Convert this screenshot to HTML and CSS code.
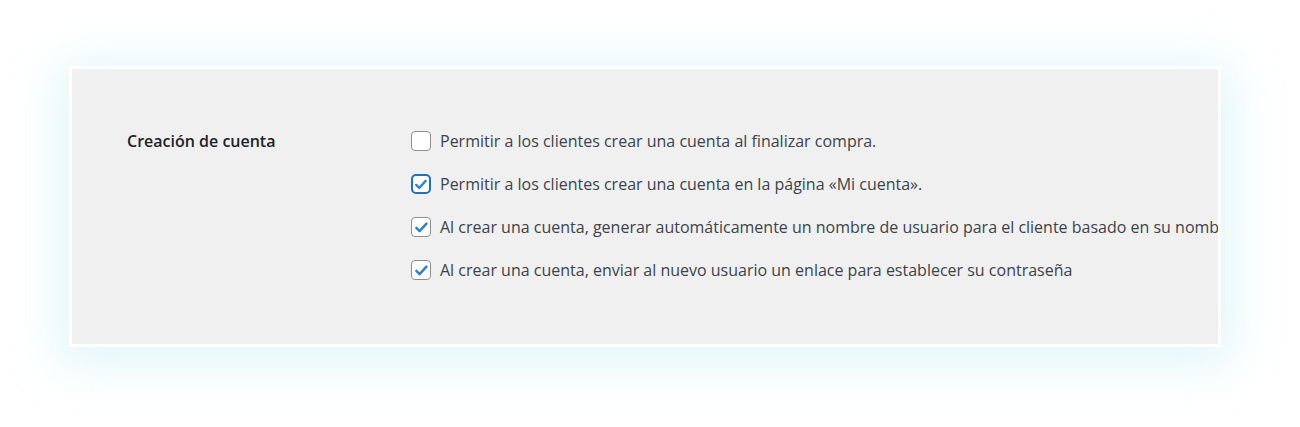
FILE: index.html
```html
<!DOCTYPE html>
<html lang="es">
<head>
  <meta charset="UTF-8" />
  <title>Creación de cuenta</title>
  <link rel="stylesheet" href="styles.css">
</head>
<body>
  <div class="card">
    <div class="row">
      <div class="label">Creación de cuenta</div>
      <ul class="options">
        <li class="opt">
          <span class="box"></span>
          <span>Permitir a los clientes crear una cuenta al finalizar compra.</span>
        </li>
        <li class="opt">
          <span class="box checked focus">
            <svg viewBox="0 0 20 20"><path d="M4 10.5l3.8 3.8 8-8.8" /></svg>
          </span>
          <span>Permitir a los clientes crear una cuenta en la página «Mi cuenta».</span>
        </li>
        <li class="opt">
          <span class="box checked">
            <svg viewBox="0 0 20 20"><path d="M4 10.5l3.8 3.8 8-8.8" /></svg>
          </span>
          <span>Al crear una cuenta, generar automáticamente un nombre de usuario para el cliente basado en su nombre, apellidos o correo electrónico</span>
        </li>
        <li class="opt">
          <span class="box checked">
            <svg viewBox="0 0 20 20"><path d="M4 10.5l3.8 3.8 8-8.8" /></svg>
          </span>
          <span>Al crear una cuenta, enviar al nuevo usuario un enlace para establecer su contraseña</span>
        </li>
      </ul>
    </div>
  </div>
</body>
</html>
```

FILE: styles.css
```css
* {
  margin: 0;
  padding: 0;
  box-sizing: border-box;
}
html, body {
  height: 100%;
}
body {
  background: #fff;
  font-family: "Open Sans", "Noto Sans", sans-serif;
  color: #3c434a;
  padding: 66px 0 0 69px;
}
.card {
  width: 1152px;
  height: 281px;
  background: #f0f0f1;
  border: 3px solid #fff;
  box-shadow: 0 8px 45px 10px rgba(170, 228, 238, 0.35);
  overflow: hidden;
}
.row {
  display: flex;
  padding: 60px 0 0 55px;
}
.label {
  flex: none;
  width: 284px;
  font-size: 16px;
  font-weight: 600;
  color: #1d2327;
  line-height: 24px;
  white-space: nowrap;
}
.options {
  list-style: none;
  display: flex;
  flex-direction: column;
  gap: 19px;
}
.opt {
  display: flex;
  align-items: center;
  gap: 9px;
  font-size: 16px;
  line-height: 24px;
  white-space: nowrap;
}
.box {
  width: 20px;
  height: 20px;
  flex: none;
  border: 1.5px solid #8c8f94;
  border-radius: 4px;
  background: #fff;
  display: flex;
  align-items: center;
  justify-content: center;
}
.box.focus {
  border: 2px solid #2271b1;
  border-radius: 5px;
}
.box svg {
  width: 17px;
  height: 17px;
}
.box path {
  fill: none;
  stroke: #3582c4;
  stroke-width: 3;
  stroke-linecap: round;
  stroke-linejoin: round;
}
```
